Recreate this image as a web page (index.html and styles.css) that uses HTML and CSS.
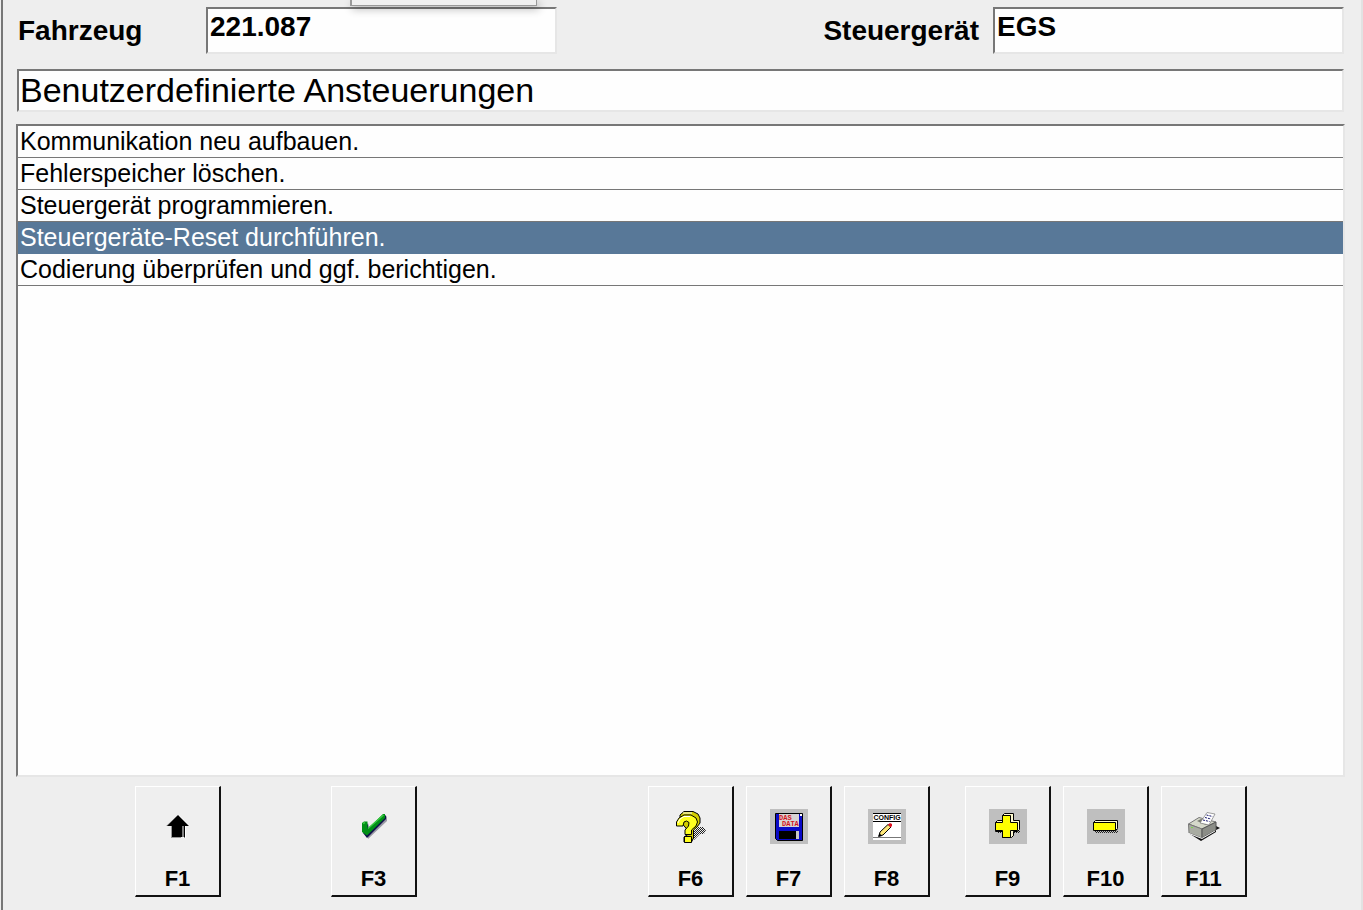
FILE: index.html
```html
<!DOCTYPE html>
<html lang="de">
<head>
<meta charset="utf-8">
<meta name="viewport" content="width=device-width, initial-scale=1">
<title>Benutzerdefinierte Ansteuerungen</title>
<link rel="stylesheet" href="styles.css">
</head>
<body>
<div class="window">
  <div class="popup-edge"></div>
  <header class="vehicle">
    <label class="caption" for="fahrzeug">Fahrzeug</label>
    <input class="field sunken" id="fahrzeug" type="text" value="221.087" readonly>
    <label class="caption caption-end" for="steuergeraet">Steuergerät</label>
    <input class="field sunken" id="steuergeraet" type="text" value="EGS" readonly>
  </header>
  <h1 class="title sunken">Benutzerdefinierte Ansteuerungen</h1>
  <ul class="list sunken">
    <li><button class="row" type="button">Kommunikation neu aufbauen.</button></li>
    <li><button class="row" type="button">Fehlerspeicher löschen.</button></li>
    <li><button class="row" type="button">Steuergerät programmieren.</button></li>
    <li><button class="row selected" type="button" aria-current="true">Steuergeräte-Reset durchführen.</button></li>
    <li><button class="row" type="button">Codierung überprüfen und ggf. berichtigen.</button></li>
  </ul>
  <nav class="keys" aria-label="Funktionstasten">
    <div class="group group-first">
      <button class="key key-f1" type="button">
        <svg class="icon" viewBox="0 0 38 35" aria-hidden="true">
          <path fill="#999" d="M7 17L18 7V29H12V17z"/>
          <path fill="#fff" d="M20 6L31 17H27V29H24V17z"/>
          <path d="M19 6L30 17H25V28H13V17H8z"/>
          <path fill="none" stroke="#fff" d="M24 17V28"/>
          <path fill="none" stroke="#000" d="M25.500 17V28.500"/>
          <path fill="none" stroke="#999" d="M12 28.500H22"/>
        </svg>
        <span>F1</span>
      </button>
      <button class="key key-f3" type="button">
        <svg class="icon" viewBox="0 0 38 35" aria-hidden="true">
          <path fill="#9a9aa4" d="M10 17L13 30L32 12V7L14 23z"/>
          <path fill="#10104c" d="M8 24L12 29L31 10V6L14 22L13 14z"/>
          <path fill="#009016" d="M7 14L9 12.500H12.500V20L28 5H30V9L12 26.500L7 23z"/>
          <path fill="none" stroke="#39c942" stroke-width="1.500" d="M8 14.500L10 13.500M13 19.500L28.500 6"/>
        </svg>
        <span>F3</span>
      </button>
    </div>
    <div class="group">
      <button class="key" type="button">
        <svg class="icon" viewBox="0 0 38 35" aria-hidden="true">
          <defs>
            <pattern id="dither" width="2" height="2" patternUnits="userSpaceOnUse">
              <path fill="#222" d="M0 0h1v1H0zM1 1h1v1H1z"/>
            </pattern>
          </defs>
          <path fill="url(#dither)" d="M21 22L26 18H31L34 21L32 25H28L22 31H19V25z"/>
          <path fill="#d2cc00" stroke="#000" d="M8 6L12 2.500H21L26 5L28 9V14L25 18L21.500 21V29L19.500 33H12V28L18 24L8 12z"/>
          <path fill="#ffff20" stroke="#000" d="M4.500 17V13L7 9L12 6H19L24 9L25.500 13L24 17L19.500 21V25.500H13V21L16.500 17L17 13.500L14.500 12L12 13L11 17z"/>
          <path fill="#ffff20" stroke="#000" d="M12.500 27.500H19.500V33.500H12.500z"/>
          <path fill="none" stroke="#fff" d="M6 14L8 10L12 7.500H18M11 4L20 4"/>
        </svg>
        <span>F6</span>
      </button>
      <button class="key" type="button">
        <svg class="icon" viewBox="0 0 38 35" aria-hidden="true">
          <path fill="#bfbfbf" d="M0 0H38V35H0z"/>
          <path fill="#0a0ac8" stroke="#000" d="M5.500 4.500H32.500V31.500H7.500L5.500 29.500z"/>
          <path fill="#d8d4d4" d="M9 5H29V18H9z"/>
          <path fill="#fff" d="M30 5H32V7H30z"/>
          <path d="M9 22H27V30H9z"/>
          <path fill="#c8c8c8" d="M26 22H29V30H26z"/>
          <text class="disk-text" x="9" y="11">DAS</text>
          <text class="disk-text" x="12" y="17">DATA</text>
        </svg>
        <span>F7</span>
      </button>
      <button class="key key-f8" type="button">
        <svg class="icon" viewBox="0 0 38 35" aria-hidden="true">
          <path fill="#bfbfbf" d="M0 0H38V35H0z"/>
          <path fill="#fff" d="M5 4H33V31H5z"/>
          <path fill="none" stroke="#000" d="M5 4.500H33M5 12.500H33"/>
          <path fill="none" stroke="#777" d="M5 28.500H33"/>
          <text class="config-text" x="19" y="11">CONFIG</text>
          <path fill="#ffe878" stroke="#000" d="M11 27L12 23L20 15.500L23 18L15 26z"/>
          <path fill="#e01020" d="M20 15.500L22 14L24 15V17L22.500 18.500z"/>
          <path d="M10 28L11.500 24L14 27z"/>
        </svg>
        <span>F8</span>
      </button>
    </div>
    <div class="group">
      <button class="key" type="button">
        <svg class="icon" viewBox="0 0 38 35" aria-hidden="true">
          <path fill="#bfbfbf" d="M0 0H38V35H0z"/>
          <path fill="url(#dither)" d="M8 21H31V24H25V28H22V24H8z"/>
          <path fill="#fffbd0" stroke="#000" d="M15.500 4.500H24.500V11.500H30.500V20.500L28.500 22.500H24.500V26.500L22.500 28.500H13.500V22.500H6.500V13.500L8.500 11.500H13.500V6.500z"/>
          <path fill="#ffff00" stroke="#000" d="M13.500 6.500H21.500V13.500H28.500V21.500H21.500V28.500H13.500V21.500H6.500V13.500H13.500z"/>
        </svg>
        <span>F9</span>
      </button>
      <button class="key" type="button">
        <svg class="icon" viewBox="0 0 38 35" aria-hidden="true">
          <path fill="#bfbfbf" d="M0 0H38V35H0z"/>
          <path fill="url(#dither)" d="M8 22H29L31 20V24H8z"/>
          <path fill="#fffbd0" stroke="#000" d="M6.500 13.500L8.500 11.500H30.500V19.500L28.500 21.500z"/>
          <path fill="#ffff00" stroke="#000" d="M6.500 13.500H28.500V21.500H6.500z"/>
        </svg>
        <span>F10</span>
      </button>
      <button class="key" type="button">
        <svg class="icon" viewBox="0 0 38 35" aria-hidden="true">
          <path fill="#111" d="M5 25L16 32L31 23V21L35 19L31 17V14L16 25z"/>
          <path fill="#d5d8ca" stroke="#777" d="M3.500 15L14 8.500L31 13L17 20z"/>
          <path fill="#a9aca2" stroke="#777" d="M3.500 15L17 20V29L4 24z"/>
          <path fill="#8b8d87" stroke="#555" d="M17 20L31 13V21L17 29z"/>
          <path fill="none" stroke="#eee" d="M4 24.500L17 29.500L30 22"/>
          <path fill="#777a70" d="M12 12L16 10L26 13L21 16z"/>
          <path fill="#fff" stroke="#777" stroke-width=".7" d="M15 14L22 3.500L30 5L24 16z"/>
          <path fill="none" stroke="#16166c" stroke-dasharray="2 1" d="M21.500 6L27.500 7.500M20 8.500L26 10M18 11L24.500 12.500"/>
          <path fill="#79d34a" d="M6 18h2v1H6z"/>
        </svg>
        <span>F11</span>
      </button>
    </div>
  </nav>
</div>
</body>
</html>
```
FILE: styles.css
```css
* {
  box-sizing: border-box;
}

body {
  margin: 0;
  background: #eee;
  color: #000;
  font-family: "Liberation Sans", Arial, sans-serif;
}

.window {
  position: relative;
  display: flex;
  flex-direction: column;
  min-height: 100vh;
  margin-left: 1px;
  padding: 7px 16px 13px 12px;
  border-left: 2px solid #777;
  border-right: 2px solid #e2e2e2;
}

/* Lower edge of a panel that hangs over the top of the window */
.popup-edge {
  position: absolute;
  top: 0;
  left: 347px;
  width: 187px;
  height: 6px;
  border: solid #999;
  border-width: 0 1px 1px 2px;
  background: #f0f0f0;
  box-shadow: 2px 3px 9px rgba(0, 0, 0, .3);
}

.sunken {
  border: 2px solid;
  border-color: #777 #e6e6e6 #e6e6e6 #777;
  background: #fefefe;
}

.vehicle {
  display: flex;
  align-items: center;
  padding: 0 1px 0 3px;
}

.caption {
  width: 188px;
  font-size: 28px;
  line-height: 32px;
  font-weight: bold;
}

.caption-end {
  width: auto;
  margin-left: auto;
  margin-right: 14px;
}

.field {
  width: 351px;
  min-width: 0;
  margin: 0;
  padding: 2px 2px 9px;
  border-radius: 0;
  color: inherit;
  font: bold 28px/32px "Liberation Sans", Arial, sans-serif;
}

.title {
  margin: 15px 1px 12px 2px;
  padding: 0 1px;
  font-size: 34px;
  line-height: 39px;
  font-weight: normal;
}

.list {
  flex: 1;
  margin: 0 0 0 1px;
  padding: 0;
  list-style: none;
}

.row {
  display: block;
  width: 100%;
  padding: 0 2px;
  border: 0;
  border-bottom: 1px solid #777;
  background: none;
  color: inherit;
  font: 25px/31px "Liberation Sans", Arial, sans-serif;
  text-align: left;
}

.selected {
  border-color: #587898;
  background: #587898;
  color: #fff;
}

.keys {
  display: flex;
  gap: 35px;
  margin-top: 9px;
  padding-left: 120px;
}

.group {
  display: grid;
  grid-template-columns: repeat(3, 86px);
  gap: 12px;
}

.group-first {
  grid-template-columns: repeat(5, 86px);
}

.key-f1 {
  grid-column: 1;
}

.key-f3 {
  grid-column: 3;
}

.key {
  display: flex;
  flex-direction: column;
  align-items: center;
  justify-content: space-between;
  height: 111px;
  padding: 22px 0 4px;
  border: solid;
  border-width: 1px 2px 2px 1px;
  border-color: #fff #111 #111 #fff;
  border-radius: 0;
  background: #efefef;
  color: #000;
  font: bold 22px/25px "Liberation Sans", Arial, sans-serif;
}

.icon {
  display: block;
  width: 38px;
  height: 35px;
}

.disk-text {
  fill: #d4141c;
  font: bold 7px "Liberation Mono", monospace;
}

.config-text {
  font: bold 7px "Liberation Sans", Arial, sans-serif;
  text-anchor: middle;
}
```
